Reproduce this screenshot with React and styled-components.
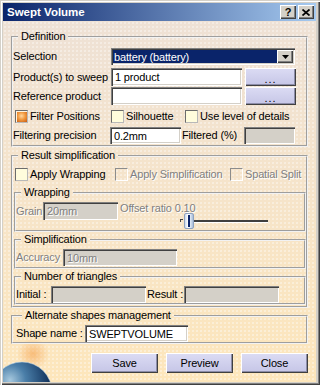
import styled, { createGlobalStyle } from "styled-components";

const GlobalStyle = createGlobalStyle`
  html, body { margin: 0; padding: 0; }
  body {
    font-family: "Liberation Sans", Arial, sans-serif;
    font-size: 11px;
    letter-spacing: -0.15px;
    color: #000;
  }
  *, *::before, *::after { box-sizing: border-box; }
`;

const Window = styled.div`
  width: 320px;
  height: 385px;
  display: flex;
  flex-direction: column;
  padding: 3px 4px 3px 3px;
  background: #d4d0c8;
  box-shadow: inset 1px 1px 0 #d4d0c8, inset 2px 2px 0 #fff,
    inset -1px -1px 0 #404040, inset -2px -2px 0 #808080;
`;

const TitleBar = styled.div`
  flex: none;
  height: 18px;
  display: flex;
  align-items: center;
  padding: 0 2px;
  background: linear-gradient(90deg, #0a246a, #a6caf0);
`;

const Title = styled.div`
  flex: 1;
  padding-left: 2px;
  color: #fff;
  font-weight: bold;
  font-size: 11.5px;
  letter-spacing: 0;
`;

const CaptionButton = styled.div`
  width: 16px;
  height: 14px;
  margin-left: 2px;
  display: flex;
  align-items: center;
  justify-content: center;
  background: #d4d0c8;
  box-shadow: inset 1px 1px 0 #fff, inset -1px -1px 0 #404040,
    inset -2px -2px 0 #808080;
  font-weight: bold;
  font-size: 11px;
  line-height: 1;
`;

const Body = styled.div`
  position: relative;
  isolation: isolate;
  flex: 1;
  overflow: hidden;
  display: flex;
  flex-direction: column;
  padding: 9px 8px 0 8px;
  background: radial-gradient(circle, rgba(255, 255, 255, 0.5) 0.6px, transparent 1px) 0 0 / 4px 4px,
    linear-gradient(180deg, #eee1d5 0%, #f6e4c9 50%, #fde6bb 100%);
`;

const Globe = styled.svg`
  position: absolute;
  left: 0;
  bottom: 0;
  z-index: -1;
  pointer-events: none;
`;

const Group = styled.fieldset`
  flex: none;
  min-width: 0;
  margin: ${(p) => p.$mt || 0}px 0 0;
  padding: ${(p) => p.$pad || "0"};
  border: 2px groove #f2f2f2;
`;

const Legend = styled.legend`
  margin-left: ${(p) => p.$ml ?? 5}px;
  padding: 0 3px;
  line-height: 13px;
  font-size: 11px;
`;

const Row = styled.div`
  display: flex;
  align-items: ${(p) => p.$align || "center"};
  height: ${(p) => (p.$h ? `${p.$h}px` : "auto")};
  margin-top: ${(p) => p.$mt || 0}px;
  margin-left: ${(p) => p.$ml || 0}px;
`;

const Label = styled.span`
  flex: none;
  width: ${(p) => (p.$w ? `${p.$w}px` : "auto")};
  padding-left: ${(p) => p.$pl || 0}px;
  white-space: nowrap;
  line-height: 13px;
  color: ${(p) => (p.$disabled ? "#808080" : "#000")};
  text-shadow: ${(p) => (p.$disabled ? "1px 1px 0 #fff" : "none")};
`;

const Field = styled.div`
  flex: none;
  width: ${(p) => p.$w}px;
  height: 100%;
  display: flex;
  align-items: center;
  padding: 0 4px;
  white-space: nowrap;
  background: ${(p) => (p.$disabled ? "#d4d0c8" : "#fff")};
  color: ${(p) => (p.$disabled ? "#808080" : "#000")};
  text-shadow: ${(p) => (p.$disabled ? "1px 1px 0 #fff" : "none")};
  box-shadow: inset 1px 1px 0 #808080, inset 2px 2px 0 #404040,
    inset -1px -1px 0 #fff, inset -2px -2px 0 #d4d0c8;
`;

const Combo = styled.div`
  flex: none;
  width: 184px;
  height: 100%;
  display: flex;
  align-items: center;
  padding: 2px;
  background: #0a246a;
  box-shadow: inset 1px 1px 0 #808080, inset 2px 2px 0 #404040,
    inset -1px -1px 0 #fff, inset -2px -2px 0 #d4d0c8;
`;

const ComboText = styled.span`
  flex: 1;
  padding-left: 1px;
  color: #fff;
  white-space: nowrap;
`;

const ComboButton = styled.span`
  flex: none;
  width: 16px;
  height: 13px;
  display: flex;
  align-items: center;
  justify-content: center;
  background: #d4d0c8;
  box-shadow: inset 1px 1px 0 #fff, inset -1px -1px 0 #404040,
    inset -2px -2px 0 #808080;
`;

const LavenderButton = styled.button`
  flex: none;
  width: ${(p) => p.$w}px;
  height: ${(p) => p.$h}px;
  margin-left: ${(p) => p.$ml || 0}px;
  padding: 0;
  border: none;
  font-family: inherit;
  font-size: 11px;
  letter-spacing: inherit;
  color: #000;
  background: linear-gradient(180deg, #dcdcf4, #c5c5e6);
  box-shadow: inset 1px 1px 0 #fff, inset -1px -1px 0 #404040,
    inset -2px -2px 0 #8c8ca8;
`;

const Dots = styled.span`
  display: block;
  padding-top: 3px;
  letter-spacing: 1px;
`;

const CheckItem = styled.span`
  flex: none;
  width: ${(p) => (p.$w ? `${p.$w}px` : "auto")};
  display: flex;
  align-items: center;
  white-space: nowrap;
  color: ${(p) => (p.$disabled ? "#808080" : "#000")};
  text-shadow: ${(p) => (p.$disabled ? "1px 1px 0 #fff" : "none")};
`;

const Box = styled.span`
  flex: none;
  width: 13px;
  height: 13px;
  margin-right: 2px;
  border: 1px solid;
  border-color: ${(p) =>
    p.$disabled ? "#8c8c8c #fff #fff #8c8c8c" : "#6c6c6c #b8b8b8 #b8b8b8 #6c6c6c"};
  background: ${(p) =>
    p.$checked
      ? "radial-gradient(circle at 50% 45%, #ffd7a0 0, #f29a40 45%, #c65a12 100%)"
      : p.$disabled
      ? "transparent"
      : "#fffcdc"};
  box-shadow: ${(p) => (p.$checked ? "inset 1px 1px 0 #fff4e0" : "none")};
`;

const OffsetColumn = styled.div`
  display: flex;
  flex-direction: column;
  margin: 3px 0 0 2px;
`;

const Slider = styled.div`
  position: relative;
  width: 88px;
  height: 16px;
  margin: -2px 0 0 60px;
`;

const Tick = styled.span`
  position: absolute;
  left: 0;
  top: 6px;
  width: 3px;
  height: 3px;
  border-left: 1px solid #404040;
  border-top: 1px solid #404040;
`;

const Track = styled.span`
  position: absolute;
  left: 14px;
  right: 0;
  top: 7px;
  height: 2px;
  background: #404040;
  box-shadow: 0 1px 0 #fff;
`;

const Thumb = styled.span`
  position: absolute;
  left: 4px;
  top: 0;
  width: 10px;
  height: 16px;
  border-radius: 2px;
  border: 1px solid #8ea2c0;
  background: linear-gradient(90deg, #c8d8ec, #fff 35%, #e8f0fa 60%, #a8bcd8);
  &::after {
    content: "";
    position: absolute;
    left: 3px;
    top: 1px;
    bottom: 1px;
    width: 2px;
    background: #0a246a;
  }
`;

const ButtonBar = styled.div`
  flex: none;
  display: flex;
  justify-content: flex-end;
  gap: 8px;
  margin-top: 9px;
`;

export default function App() {
  return (
    <Window>
      <GlobalStyle />
      <TitleBar>
        <Title>Swept Volume</Title>
        <CaptionButton>?</CaptionButton>
        <CaptionButton>
          <svg width="8" height="7" viewBox="0 0 8 7">
            <path d="M0.5 0.5 L7.5 6.5 M7.5 0.5 L0.5 6.5" stroke="#000" strokeWidth="1.7" />
          </svg>
        </CaptionButton>
      </TitleBar>

      <Body>
        <Globe width="70" height="50" viewBox="0 0 70 50">
          <defs>
            <radialGradient id="glow" cx="0.5" cy="0.5" r="0.5">
              <stop offset="0" stopColor="#f5a04a" stopOpacity="0.6" />
              <stop offset="1" stopColor="#f5a04a" stopOpacity="0" />
            </radialGradient>
            <radialGradient id="earth" cx="0.3" cy="0.3" r="0.75">
              <stop offset="0" stopColor="#a6c8de" />
              <stop offset="0.35" stopColor="#4a7ea8" />
              <stop offset="0.8" stopColor="#1a3e68" />
              <stop offset="1" stopColor="#0b2246" />
            </radialGradient>
          </defs>
          <circle cx="30" cy="22" r="16" fill="url(#glow)" />
          <circle cx="19" cy="60" r="30" fill="url(#earth)" />
          <circle cx="19" cy="60" r="30" fill="none" stroke="#bcd8ee" strokeOpacity="0.5" strokeWidth="1" />
        </Globe>

        <Group $pad="5px 0 1px 0">
          <Legend>Definition</Legend>
          <Row $h={17}>
            <Label $w={98}>Selection</Label>
            <Combo>
              <ComboText>battery (battery)</ComboText>
              <ComboButton>
                <svg width="7" height="4" viewBox="0 0 7 4">
                  <path d="M0 0 H7 L3.5 4 Z" fill="#000" />
                </svg>
              </ComboButton>
            </Combo>
          </Row>
          <Row $h={18} $mt={3}>
            <Label $w={98}>Product(s) to sweep</Label>
            <Field $w={131}>1 product</Field>
            <LavenderButton $w={51} $h={18} $ml={3}>
              <Dots>...</Dots>
            </LavenderButton>
          </Row>
          <Row $h={18} $mt={1}>
            <Label $w={98}>Reference product</Label>
            <Field $w={131} />
            <LavenderButton $w={51} $h={18} $ml={3}>
              <Dots>...</Dots>
            </LavenderButton>
          </Row>
          <Row $h={22} $ml={2}>
            <CheckItem $w={96}>
              <Box $checked />
              Filter Positions
            </CheckItem>
            <CheckItem $w={74}>
              <Box />
              Silhouette
            </CheckItem>
            <CheckItem>
              <Box />
              Use level of details
            </CheckItem>
          </Row>
          <Row $h={17}>
            <Label $w={97}>Filtering precision</Label>
            <Field $w={71}>0.2mm</Field>
            <Label $w={63} $pl={1}>Filtered (%)</Label>
            <Field $w={51} $disabled />
          </Row>
        </Group>

        <Group $mt={2} $pad="0 0 1px 1px">
          <Legend $ml={4}>Result simplification</Legend>
          <Row $h={24} $ml={1}>
            <CheckItem $w={100}>
              <Box />
              Apply Wrapping
            </CheckItem>
            <CheckItem $w={115} $disabled>
              <Box $disabled />
              Apply Simplification
            </CheckItem>
            <CheckItem $disabled>
              <Box $disabled />
              Spatial Split
            </CheckItem>
          </Row>

          <Group $pad="0 0 1px 0">
            <Legend>Wrapping</Legend>
            <Row $align="flex-start">
              <Row $h={18} $mt={3}>
                <Label $w={27} $disabled>Grain</Label>
                <Field $w={75} $disabled>20mm</Field>
              </Row>
              <OffsetColumn>
                <Label $disabled>Offset ratio 0.10</Label>
                <Slider>
                  <Tick />
                  <Track />
                  <Thumb />
                </Slider>
              </OffsetColumn>
            </Row>
          </Group>

          <Group $mt={1} $pad="3px 0 1px 0">
            <Legend>Simplification</Legend>
            <Row $h={17}>
              <Label $w={47} $disabled>Accuracy</Label>
              <Field $w={114} $disabled>10mm</Field>
            </Row>
          </Group>

          <Group $mt={1} $pad="3px 0 0 0">
            <Legend>Number of triangles</Legend>
            <Row $h={17}>
              <Label $w={35}>Initial :</Label>
              <Field $w={95} $disabled />
              <Label $w={38} $pl={1}>Result :</Label>
              <Field $w={95} $disabled />
            </Row>
          </Group>
        </Group>

        <Group $mt={1} $pad="3px 0 0 3px">
          <Legend $ml={6}>Alternate shapes management</Legend>
          <Row $h={17}>
            <Label $w={69}>Shape name :</Label>
            <Field $w={103}>SWEPTVOLUME</Field>
          </Row>
        </Group>

        <ButtonBar>
          <LavenderButton $w={67} $h={20}>Save</LavenderButton>
          <LavenderButton $w={67} $h={20}>Preview</LavenderButton>
          <LavenderButton $w={67} $h={20}>Close</LavenderButton>
        </ButtonBar>
      </Body>
    </Window>
  );
}
